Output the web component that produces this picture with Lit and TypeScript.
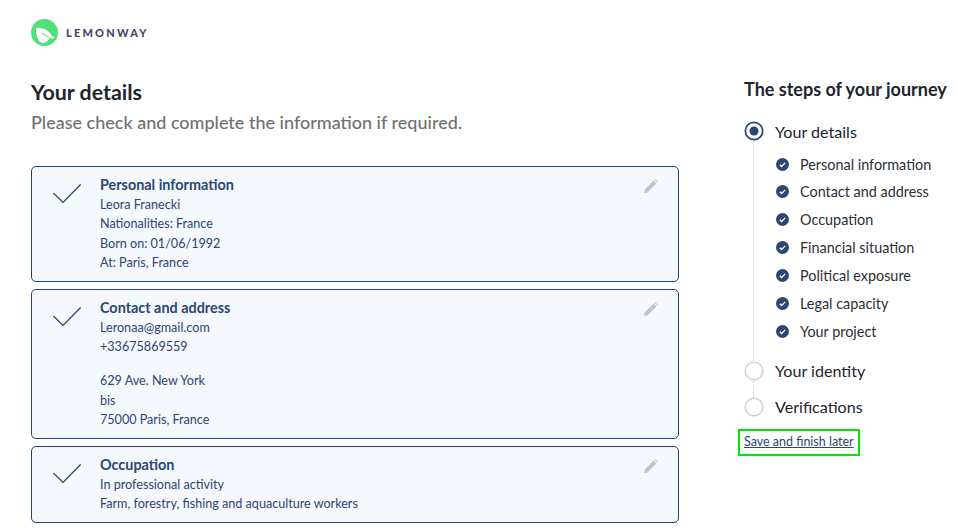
import { LitElement, html, css } from "lit";
import { customElement } from "lit/decorators.js";

const leaf = html`<svg class="logo-mark" viewBox="0 0 27 27" width="27" height="27">
  <circle cx="13.5" cy="13.5" r="13.5" fill="#4fe07a"></circle>
  <path d="M5 9 C10 8.5 15 10 18 13 C20 15.5 22 17.5 24 19 C22 19.5 20 19.5 18.5 19 C17.5 22 14 24.5 11 24 C7 23 4.5 15 5 9 Z" fill="#fff"></path>
  <path d="M11 14 C13.5 15.5 16 17.5 18.5 19" stroke="#4fe07a" stroke-width="1" fill="none"></path>
</svg>`;

const check = html`<svg class="check" viewBox="0 0 28 19" width="28" height="19">
  <path d="M0.4 9 L10 18.4 L27.6 0.4" fill="none" stroke="#2b4675" stroke-width="1.3"></path>
</svg>`;

const pencil = html`<svg class="pencil" viewBox="0 0 14 14" width="14" height="14">
  <path d="M0 14 L0.6 10.6 L9.6 1.6 L12.4 4.4 L3.4 13.4 Z M10.4 0.8 L11.2 0 L14 2.8 L13.2 3.6 Z" fill="#bcc5d4"></path>
</svg>`;

const tick = html`<svg class="tick" viewBox="0 0 13 13" width="13" height="13">
  <circle cx="6.5" cy="6.5" r="6.5" fill="#2b4675"></circle>
  <path d="M3.8 6.8 L5.6 8.5 L9.2 4.9" fill="none" stroke="#fff" stroke-width="1.3"></path>
</svg>`;

const radioActive = html`<svg class="radio" viewBox="0 0 20 20" width="20" height="20">
  <circle cx="10" cy="10" r="8.7" fill="#fff" stroke="#2b4675" stroke-width="1.7"></circle>
  <circle cx="10" cy="10" r="4.5" fill="#2b4675"></circle>
</svg>`;

const radioIdle = html`<svg class="radio" viewBox="0 0 20 20" width="20" height="20">
  <circle cx="10" cy="10" r="8.8" fill="#fff" stroke="#cdd3dc" stroke-width="1.6"></circle>
</svg>`;

const cards = [
  { title: "Personal information", blocks: [["Leora Franecki", "Nationalities: France", "Born on: 01/06/1992", "At: Paris, France"]] },
  { title: "Contact and address", blocks: [["Leronaa@gmail.com", "+33675869559"], ["629 Ave. New York", "bis", "75000 Paris, France"]] },
  { title: "Occupation", blocks: [["In professional activity", "Farm, forestry, fishing and aquaculture workers"]] },
];

const subSteps = [
  "Personal information",
  "Contact and address",
  "Occupation",
  "Financial situation",
  "Political exposure",
  "Legal capacity",
  "Your project",
];

@customElement("app-root")
export class AppRoot extends LitElement {
  static styles = css`
    :host {
      --navy: #2b4675;
      display: block;
      height: 528px;
      overflow: hidden;
      background: #fff;
      font-family: Lato, "Liberation Sans", sans-serif;
      color: #1f2430;
    }
    .page {
      display: grid;
      grid-template-columns: 648px 214px;
      column-gap: 65px;
      padding: 0 0 0 31px;
    }
    .logo {
      grid-column: 1 / -1;
      display: flex;
      align-items: center;
      gap: 8px;
      height: 27px;
      padding-top: 19px;
      margin-bottom: 32px;
    }
    .logo-name {
      font-size: 11px;
      font-weight: 900;
      letter-spacing: 2.2px;
      color: #454a68;
    }
    h1 {
      margin: 0;
      font-size: 21.4px;
      line-height: 26px;
      font-weight: 700;
      color: #20252e;
      padding-top: 1px;
    }
    .sub {
      margin: 6px 0 33px;
      font-size: 18px;
      line-height: 22px;
      font-weight: 500;
      color: #707070;
    }
    .cards {
      display: flex;
      flex-direction: column;
      gap: 7px;
    }
    .card {
      position: relative;
      display: flex;
      box-sizing: border-box;
      border: 1px solid #26416f;
      border-radius: 5px;
      background: #f5f8fc;
      padding: 8px 0 8.4px 21px;
      color: var(--navy);
    }
    .check {
      flex: none;
      margin-top: 9px;
      margin-right: 19px;
    }
    .card-title {
      font-size: 14.4px;
      font-weight: 700;
      line-height: 19.6px;
    }
    .line {
      font-size: 12.6px;
      line-height: 19.5px;
    }
    .block + .block {
      margin-top: 14.5px;
    }
    .pencil {
      position: absolute;
      top: 12px;
      right: 20px;
    }
    h2 {
      margin: 0 0 21px;
      font-size: 18px;
      line-height: 22px;
      font-weight: 700;
      color: #20252e;
      white-space: nowrap;
    }
    .step {
      display: flex;
      align-items: center;
      gap: 11px;
      height: 20px;
      font-size: 16.1px;
      color: #20252e;
      position: relative;
      z-index: 1;
    }
    .subs {
      border-left: 1px dotted #c8ccd3;
      margin-left: 9px;
      padding: 14px 0 20.6px 22px;
      display: flex;
      flex-direction: column;
      gap: 9.85px;
    }
    .sub-step {
      display: flex;
      align-items: center;
      gap: 11px;
      height: 18px;
      font-size: 14.4px;
      color: #2a2f3a;
      white-space: nowrap;
    }
    .connector {
      border-left: 1px dotted #c8ccd3;
      margin-left: 9px;
      height: 16px;
    }
    .save-wrap {
      display: inline-block;
      margin: 12px 0 0 -6px;
      border: 2px solid #00e600;
      padding: 3px 4px 4px;
    }
    .save {
      display: block;
      font-size: 12.5px;
      line-height: 16px;
      color: var(--navy);
      text-decoration: underline;
    }
  `;

  render() {
    return html`<div class="page">
      <div class="logo">${leaf}<span class="logo-name">LEMONWAY</span></div>
      <main>
        <h1>Your details</h1>
        <p class="sub">Please check and complete the information if required.</p>
        <div class="cards">
          ${cards.map(
            (c) => html`<section class="card">
              ${check}
              <div>
                <div class="card-title">${c.title}</div>
                ${c.blocks.map(
                  (b) => html`<div class="block">${b.map((l) => html`<div class="line">${l}</div>`)}</div>`
                )}
              </div>
              ${pencil}
            </section>`
          )}
        </div>
      </main>
      <aside>
        <h2>The steps of your journey</h2>
        <div class="step">${radioActive}<span>Your details</span></div>
        <div class="subs">
          ${subSteps.map((s) => html`<div class="sub-step">${tick}<span>${s}</span></div>`)}
        </div>
        <div class="step">${radioIdle}<span>Your identity</span></div>
        <div class="connector"></div>
        <div class="step">${radioIdle}<span>Verifications</span></div>
        <div class="save-wrap"><a class="save">Save and finish later</a></div>
      </aside>
    </div>`;
  }
}
